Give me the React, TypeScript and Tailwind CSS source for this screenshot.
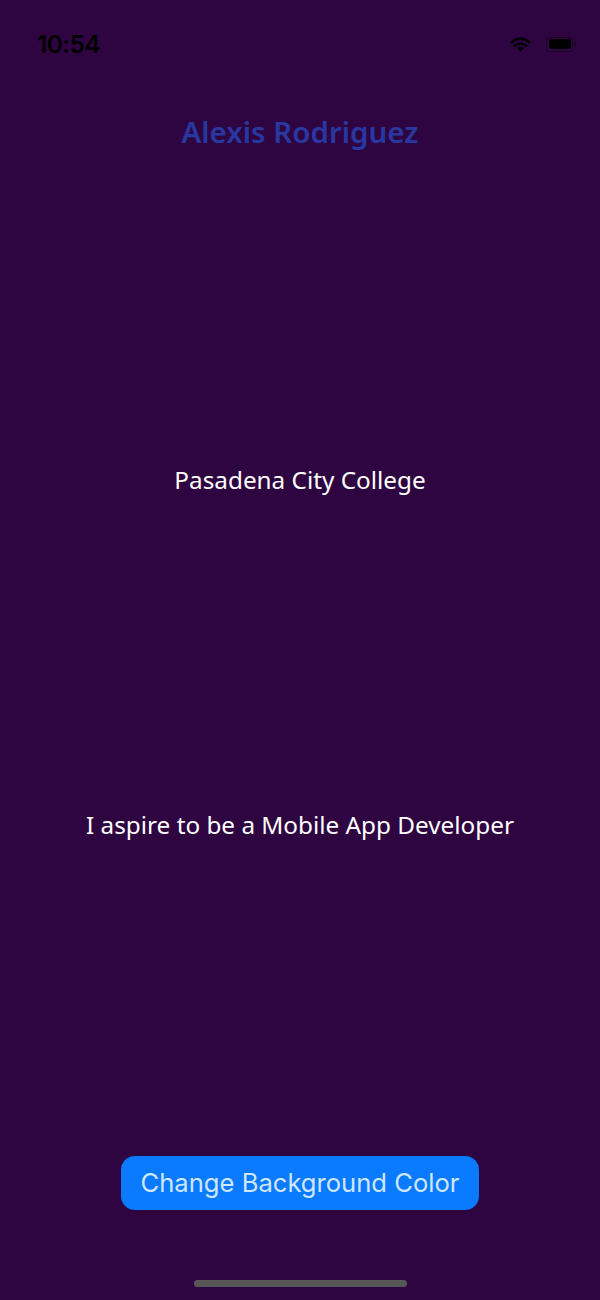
import React from 'react';

const StatusBar: React.FC = () => (
  <div className="h-[88px] flex items-center justify-between pl-[37px] pr-[24px]">
    <span className="text-[24.5px] font-semibold text-black tracking-tight" style={{ fontFamily: 'Inter, sans-serif' }}>
      10:54
    </span>
    <div className="flex items-center gap-[14px]">
      <svg width="23" height="17" viewBox="0 0 20 16">
        <path d="M10 15 L6.8 11.4 A4.6 4.6 0 0 1 13.2 11.4 Z" fill="#000" />
        <path d="M4.6 9.2 A7.8 7.8 0 0 1 15.4 9.2" stroke="#000" strokeWidth="2.4" fill="none" strokeLinecap="round" />
        <path d="M1.6 6 A12 12 0 0 1 18.4 6" stroke="#000" strokeWidth="2.4" fill="none" strokeLinecap="round" />
      </svg>
      <div className="flex items-center">
        <div className="w-[27px] h-[15px] rounded-[4px] border border-black/40 p-[1.5px]">
          <div className="w-full h-full rounded-[2.5px] bg-black" />
        </div>
        <div className="w-[2px] h-[5px] rounded-r-sm bg-black/40 ml-[1px]" />
      </div>
    </div>
  </div>
);

export default function App() {
  return (
    <div className="w-[600px] h-[1300px] bg-[#2e0540] flex flex-col items-center" style={{ fontFamily: '"Noto Sans", sans-serif' }}>
      <div className="w-full">
        <StatusBar />
      </div>
      <h1 className="mt-[26px] h-[36px] leading-[36px] text-[29.5px] font-semibold text-[#2838a0]">Alexis Rodriguez</h1>
      <p className="mt-[314px] h-[32px] leading-[32px] text-[24.3px] text-white">Pasadena City College</p>
      <p className="mt-[313px] h-[32px] leading-[32px] text-[24.3px] text-white">I aspire to be a Mobile App Developer</p>
      <button
        className="mt-[315px] w-[358px] h-[54px] rounded-[14px] bg-[#0a7aff] text-[25.6px] text-[#cfe6ff]"
        style={{ fontFamily: 'Inter, sans-serif' }}
      >
        Change Background Color
      </button>
      <div className="mt-[70px] w-[213px] h-[7px] rounded-full bg-[#575757]" />
    </div>
  );
}
